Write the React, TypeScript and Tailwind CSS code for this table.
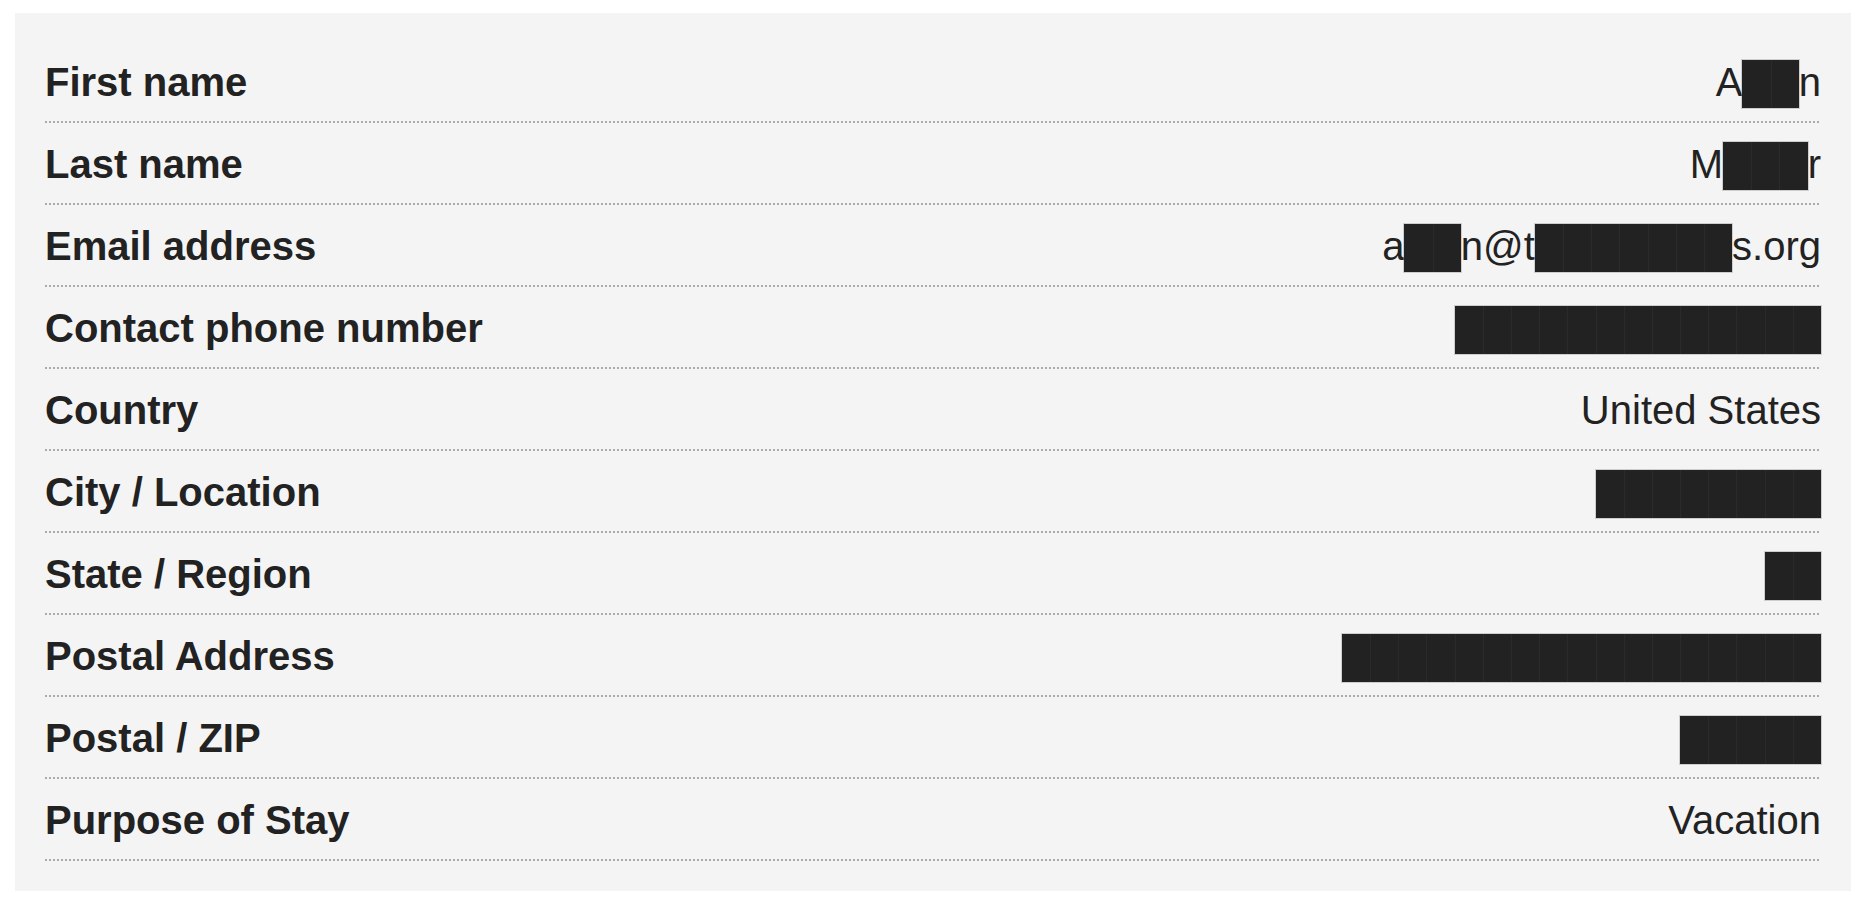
import React from "react";

type Part = string | number;

const rows: { label: string; value: Part[] }[] = [
  { label: "First name", value: ["A", 2, "n"] },
  { label: "Last name", value: ["M", 3, "r"] },
  { label: "Email address", value: ["a", 2, "n@t", 7, "s.org"] },
  { label: "Contact phone number", value: [13] },
  { label: "Country", value: ["United States"] },
  { label: "City / Location", value: [8] },
  { label: "State / Region", value: [2] },
  { label: "Postal Address", value: [17] },
  { label: "Postal / ZIP", value: [5] },
  { label: "Purpose of Stay", value: ["Vacation"] },
];

function Redacted({ n }: { n: number }) {
  return (
    <span className="inline-flex h-[48px] align-[-12px] bg-[#222222] shadow-[0_0_0_1px_rgba(150,150,150,0.4)]">
      {Array.from({ length: n }).map((_, i) => (
        <span
          key={i}
          className={
            i === 0
              ? "block h-full w-[28.2px] bg-[#222222]"
              : "block h-full w-[28.2px] bg-[#222222] border-l border-[#2a2a2a]"
          }
        />
      ))}
    </span>
  );
}

export default function App() {
  return (
    <div className="min-h-screen bg-white pt-[13px] pl-[15px] font-['Liberation_Sans',Arial,sans-serif] text-[#222222]">
      <div className="w-[1836px] bg-[#f4f4f4] px-[30px] pt-[28px] pb-[30px]">
        {rows.map((r) => (
          <div key={r.label} className="flex flex-col">
            <div className="flex h-[80px] items-start justify-between pt-[18px] text-[40px] leading-[46px]">
              <div className="font-bold whitespace-nowrap">{r.label}</div>
              <div className="whitespace-nowrap text-right">
                {r.value.map((p, i) =>
                  typeof p === "number" ? (
                    <Redacted key={i} n={p} />
                  ) : (
                    <span key={i}>{p}</span>
                  )
                )}
              </div>
            </div>
            <div className="h-[2px] w-full bg-[repeating-linear-gradient(to_right,#aaaaaa_0px,#aaaaaa_2px,transparent_2px,transparent_4px)]" />
          </div>
        ))}
      </div>
    </div>
  );
}
